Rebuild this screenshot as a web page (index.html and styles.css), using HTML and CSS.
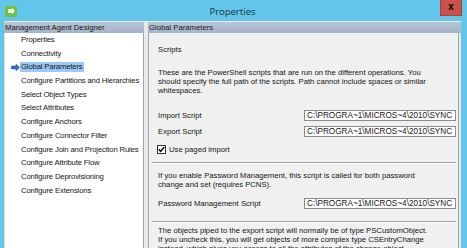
FILE: index.html
```html
<!DOCTYPE html>
<html lang="en">
<head>
    <meta charset="UTF-8">
    <title>Properties</title>
    <link rel="stylesheet" href="styles.css">
</head>
<body>
    <div class="window">
        <div class="titlebar">
            <div class="app-icon">
                <svg width="12" height="11" viewBox="0 0 12 11">
                    <rect x="0" y="0" width="12" height="11" rx="2" fill="#6fbf45"/>
                    <path d="M3 3h4v-1.5l3 3.5-3 3.5v-1.5h-4z" fill="#e9f6df"/>
                </svg>
            </div>
            <div class="title">Properties</div>
            <div class="close-btn">x</div>
        </div>

        <div class="panes">
            <div class="left-pane">
                <div class="pane-head">Management Agent Designer</div>
                <ul class="nav">
                    <li>Properties</li>
                    <li>Connectivity</li>
                    <li class="active">
                        <svg class="arrow" width="9" height="7" viewBox="0 0 9 7">
                            <path d="M0.5 2h4.5v-1.8l3.6 3.3-3.6 3.3v-1.8h-4.5z" fill="#2f72c8" stroke="#1d4f96" stroke-width="0.5"/>
                        </svg>
                        <span>Global Parameters</span>
                    </li>
                    <li>Configure Partitions and Hierarchies</li>
                    <li>Select Object Types</li>
                    <li>Select Attributes</li>
                    <li>Configure Anchors</li>
                    <li>Configure Connector Filter</li>
                    <li>Configure Join and Projection Rules</li>
                    <li>Configure Attribute Flow</li>
                    <li>Configure Deprovisioning</li>
                    <li>Configure Extensions</li>
                </ul>
            </div>

            <div class="right-pane">
                <div class="pane-head">Global Parameters</div>
                <div class="content">
                    <div class="section-title">Scripts</div>
                    <p class="desc">These are the PowerShell scripts that are run on the different operations. You<br>should specify the full path of the scripts. Path cannot include spaces or similar<br>whitespaces.</p>

                    <div class="field-row first">
                        <label>Import Script</label>
                        <div class="textbox">C:\PROGRA~1\MICROS~4\2010\SYNC</div>
                    </div>
                    <div class="field-row">
                        <label>Export Script</label>
                        <div class="textbox">C:\PROGRA~1\MICROS~4\2010\SYNC</div>
                    </div>
                    <div class="check-row">
                        <span class="checkbox">
                            <svg width="7" height="7" viewBox="0 0 7 7">
                                <path d="M0.8 3.4l1.9 1.9 3.6-4.2" fill="none" stroke="#111" stroke-width="1.5"/>
                            </svg>
                        </span>
                        <span>Use paged import</span>
                    </div>

                    <div class="separator"></div>

                    <p class="desc">If you enable Password Management, this script is called for both password<br>change and set (requires PCNS).</p>
                    <div class="field-row pw">
                        <label>Password Management Script</label>
                        <div class="textbox">C:\PROGRA~1\MICROS~4\2010\SYNC</div>
                    </div>

                    <div class="separator second"></div>

                    <p class="desc last">The objects piped to the export script will normally be of type PSCustomObject.<br>If you uncheck this, you will get objects of more complex type CSEntryChange<br>instead, which gives you access to all the attributes of the change object.</p>
                </div>
            </div>
        </div>
    </div>
</body>
</html>
```

FILE: styles.css
```css
:root {
    --frame: #62c6ea;
    --head-top: #bac7d7;
    --head-bottom: #a4b3c7;
    --text: #151515;
    --panel: #f0f0f0;
}
body {
    margin: 0;
    padding: 0;
    font-family: "Liberation Sans", Arial, sans-serif;
    font-size: 7.7px;
    color: var(--text);
}
.window {
    width: 467px;
    height: 248px;
    background-color: var(--frame);
    padding: 0 6px 0 4px;
    box-sizing: border-box;
    display: flex;
    flex-direction: column;
    overflow: hidden;
}
.titlebar {
    height: 21px;
    flex-shrink: 0;
    display: flex;
    align-items: flex-start;
    position: relative;
}
.app-icon {
    width: 12px;
    height: 11px;
    margin: 6px 0 0 1px;
}
.app-icon svg {
    display: block;
}
.title {
    position: absolute;
    left: 0;
    right: 0;
    top: 5px;
    text-align: center;
    font-family: "Segoe UI", "Noto Sans", sans-serif;
    font-size: 9.5px;
    line-height: 13px;
    color: #213c49;
}
.close-btn {
    margin-left: auto;
    margin-right: -1px;
    width: 22px;
    height: 16px;
    background-color: #c9524b;
    border: 1px solid #a8433d;
    border-top: none;
    box-sizing: border-box;
    color: #000;
    font-family: "Liberation Sans", Arial, sans-serif;
    font-weight: bold;
    font-size: 10px;
    line-height: 13px;
    text-align: center;
    position: relative;
    z-index: 1;
}
.panes {
    flex: 1;
    display: flex;
    gap: 4px;
    background-color: #e8e9eb;
    padding-top: 1px;
    min-height: 0;
}
.pane-head {
    height: 11px;
    flex-shrink: 0;
    line-height: 11px;
    padding-left: 1px;
    background: linear-gradient(var(--head-top), var(--head-bottom));
    white-space: nowrap;
    overflow: hidden;
}
.left-pane {
    width: 140px;
    flex-shrink: 0;
    display: flex;
    flex-direction: column;
}
.nav {
    flex: 1;
    list-style: none;
    margin: 0;
    padding: 0;
    background-color: #fff;
    border-left: 1px solid #dcdcdc;
    border-right: 1px solid #a3a3a3;
}
.nav li {
    height: 13.7px;
    line-height: 13.7px;
    padding-left: 16px;
    letter-spacing: -0.15px;
    white-space: nowrap;
    position: relative;
}
.nav li.active span {
    display: inline-block;
    background-color: #9ccaf5;
    line-height: 10px;
    padding: 0 1px;
    margin-left: -1px;
}
.arrow {
    position: absolute;
    left: 6px;
    top: 4px;
}
.right-pane {
    flex: 1;
    min-width: 0;
    display: flex;
    flex-direction: column;
}
.content {
    flex: 1;
    min-height: 0;
    overflow: hidden;
    background-color: var(--panel);
    border-left: 1px solid #a3a3a3;
    border-right: 1px solid #a3a3a3;
    margin-right: 2px;
    padding: 12px 2px 0 9px;
}
.section-title {
    line-height: 9px;
}
.desc {
    margin: 14px 0 0;
    line-height: 9px;
    white-space: nowrap;
}
.field-row {
    display: flex;
    align-items: center;
    margin-top: 5px;
}
.field-row.first {
    margin-top: 15px;
}
.field-row.pw {
    margin-top: 9px;
}
.field-row label {
    width: 146px;
    flex-shrink: 0;
}
.textbox {
    flex: 1;
    height: 11px;
    font-size: 8.2px;
    line-height: 10px;
    background-color: #fff;
    border: 1px solid #8c8c8c;
    box-sizing: border-box;
    padding-left: 2px;
    white-space: nowrap;
    overflow: hidden;
    min-width: 0;
}
.check-row {
    display: flex;
    align-items: center;
    gap: 3px;
    margin-top: 8px;
    margin-left: -1px;
    height: 9px;
}
.checkbox {
    width: 9px;
    height: 9px;
    box-sizing: border-box;
    border: 1px solid #333;
    background-color: #fff;
    display: flex;
    align-items: center;
    justify-content: center;
}
.checkbox svg {
    display: block;
}
.separator {
    margin: 8px 0 0 -6px;
    border-top: 1px solid #a0a0a0;
    border-bottom: 1px solid #fff;
}
.separator.second {
    margin-top: 12px;
}
.separator + .desc {
    margin-top: 7px;
}
.separator.second + .desc {
    margin-top: 3px;
}
```
